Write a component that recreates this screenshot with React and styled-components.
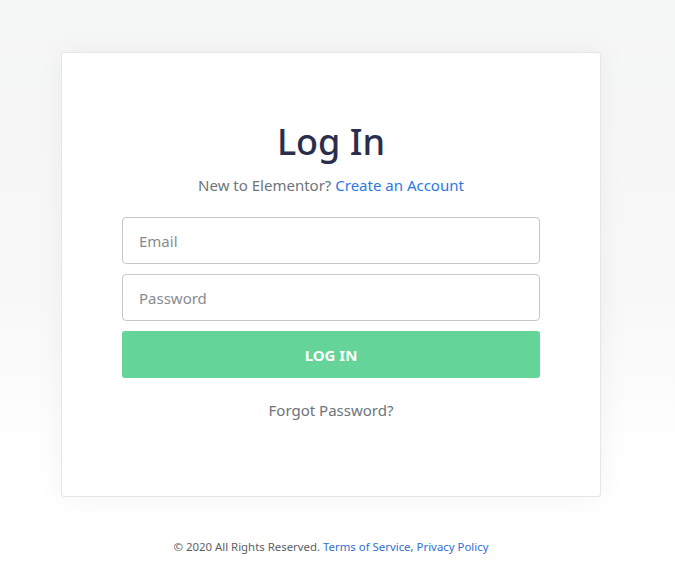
import React from "react";
import styled, { createGlobalStyle } from "styled-components";

const GlobalStyle = createGlobalStyle`
  html, body {
    margin: 0;
    padding: 0;
  }
  body {
    font-family: "Noto Sans", "Open Sans", sans-serif;
    background: linear-gradient(#f5f6f6 0px, #f8f8f8 300px, #ffffff 470px, #ffffff 100%);
    min-height: 577px;
  }
`;

const Page = styled.div`
  display: flex;
  flex-direction: column;
  align-items: center;
  padding: 52px 13px 0 0;
`;

const Card = styled.div`
  box-sizing: border-box;
  width: 540px;
  height: 445px;
  padding: 67px 60px 0;
  background: #fff;
  border: 1px solid #e4e6e8;
  border-radius: 3px;
  box-shadow: 0 0 30px rgba(0, 0, 0, 0.05);
  display: flex;
  flex-direction: column;
  align-items: stretch;
`;

const Title = styled.h1`
  margin: 0;
  text-align: center;
  font-size: 36px;
  line-height: 43px;
  font-weight: 500;
  color: #2b2d4c;
`;

const Subtitle = styled.p`
  margin: 11px 0 21px;
  text-align: center;
  font-size: 15px;
  line-height: 22px;
  color: #6d747b;
`;

const Link = styled.a`
  color: ${(p) => p.color || "#2b78e4"};
  text-decoration: none;
`;

const Form = styled.form`
  display: flex;
  flex-direction: column;
  gap: 10px;
`;

const Input = styled.input`
  box-sizing: border-box;
  height: 47px;
  width: 100%;
  padding: 0 16px;
  border: 1px solid #c6c7c9;
  border-radius: 4px;
  font-family: inherit;
  font-size: 15px;
  color: #333;
  outline: none;
  &::placeholder {
    color: #878c91;
  }
`;

const Button = styled.button`
  height: 47px;
  border: none;
  border-radius: 3px;
  background: #64d498;
  color: #fff;
  font-family: inherit;
  font-size: 15px;
  font-weight: 700;
  cursor: pointer;
`;

const Forgot = styled.a`
  display: block;
  margin-top: 21px;
  text-align: center;
  font-size: 15px;
  line-height: 22px;
  color: #6d747b;
  text-decoration: none;
`;

const Footer = styled.footer`
  margin-top: 41px;
  font-size: 11.4px;
  line-height: 18px;
  color: #5b6066;
`;

const App = () => {
  return (
    <>
      <GlobalStyle />
      <Page>
        <Card>
          <Title>Log In</Title>
          <Subtitle>
            New to Elementor? <Link href="#">Create an Account</Link>
          </Subtitle>
          <Form onSubmit={(e) => e.preventDefault()}>
            <Input type="email" placeholder="Email" />
            <Input type="password" placeholder="Password" />
            <Button type="submit">LOG IN</Button>
          </Form>
          <Forgot href="#">Forgot Password?</Forgot>
        </Card>
        <Footer>
          © 2020 All Rights Reserved.{" "}
          <Link href="#" color="#2f6fd6">Terms of Service</Link>,{" "}
          <Link href="#" color="#2f6fd6">Privacy Policy</Link>
        </Footer>
      </Page>
    </>
  );
};

export default App;
